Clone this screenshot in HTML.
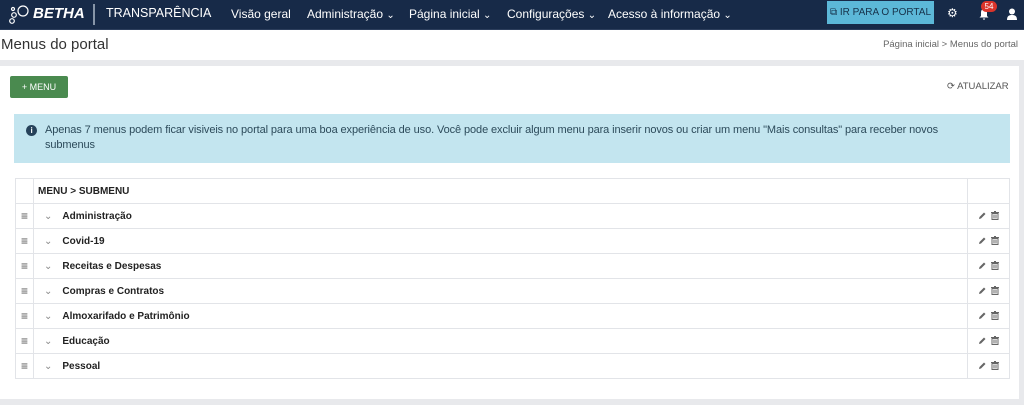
<!DOCTYPE html>
<html><head><meta charset="utf-8"><style>
*{box-sizing:border-box;margin:0;padding:0}
body{width:1024px;height:405px;overflow:hidden;background:#e8e9ec;font-family:"Liberation Sans",sans-serif;position:relative}
.nav{position:absolute;left:0;top:0;width:1024px;height:29px;background:#172a48;color:#fff;font-size:12px}
.nav span{position:absolute;top:7px;white-space:nowrap}
.hdr{position:absolute;left:0;top:29px;width:1024px;height:31px;background:#fff;border-top:1px solid #2c3e5c}
.main{position:absolute;left:0;top:66px;width:1019px;height:333px;background:#fff}
.btn{position:absolute;left:10px;top:76px;width:58px;height:22px;background:#4a8a4f;color:#fff;font-size:9px;line-height:22px;text-align:center;border-radius:2px}
.alert{position:absolute;left:14px;top:114px;width:996px;height:49px;background:#c3e5ef;color:#2c4a5a;font-size:11px;line-height:15px;padding:9px 0 0 31px;letter-spacing:-0.1px}
table{position:absolute;left:15px;top:178px;width:995px;border-collapse:collapse;font-size:10px}
td{border:1px solid #e2e4e8;height:25px;color:#222}
td.h{width:18px;text-align:center;color:#555;font-size:12px}
td.a{width:42px;text-align:center}
td.a svg{vertical-align:middle;margin:0 2px}
b{font-weight:bold}
</style></head><body>
<div class="nav">
<svg style="position:absolute;left:8px;top:5px" width="22" height="20" viewBox="0 0 22 20" fill="none" stroke="#fff" stroke-width="1.2"><circle cx="15" cy="6" r="5"/><circle cx="6" cy="10" r="2.3"/><circle cx="4" cy="16" r="2.3"/><circle cx="5" cy="4" r="1.5"/></svg>
<span style="left:33px;top:5px;font-size:15px;font-weight:bold;font-style:italic">BETHA</span>
<div style="position:absolute;left:93px;top:4px;width:2px;height:21px;background:#8795a8"></div>
<span style="left:106px;top:6px;font-size:12.5px">TRANSPARÊNCIA</span>
<span style="left:231px">Visão geral</span>
<span style="left:307px">Administração <small>⌄</small></span>
<span style="left:409px">Página inicial <small>⌄</small></span>
<span style="left:507px">Configurações <small>⌄</small></span>
<span style="left:608px">Acesso à informação <small>⌄</small></span>
<div style="position:absolute;left:827px;top:1px;width:107px;height:23px;background:#5cb8d8;color:#17324a;font-size:10px;padding-top:6px;text-align:center">⧉ IR PARA O PORTAL</div>
<span style="left:947px;top:6px;font-size:12px">⚙</span>
<svg style="position:absolute;left:978px;top:8px" width="12" height="12" viewBox="0 0 12 12"><path d="M6 1C3.5 1 3 3 3 5v3L1.5 9.5h9L9 8V5C9 3 8.5 1 6 1zM4.8 10.5h2.4a1.2 1.2 0 0 1-2.4 0z" fill="#fff"/></svg>
<div style="position:absolute;left:981px;top:1px;width:16px;height:11px;background:#d9342b;border-radius:6px;font-size:8px;line-height:11px;text-align:center">54</div>
<svg style="position:absolute;left:1007px;top:8px" width="10" height="12" viewBox="0 0 10 12"><circle cx="5" cy="3.5" r="3" fill="#fff"/><path d="M0 12c0-4 2-5 5-5s5 1 5 5z" fill="#fff"/></svg>
</div>
<div class="hdr">
<div style="position:absolute;left:1px;top:6px;font-size:15px;color:#333">Menus do portal</div>
<div style="position:absolute;right:6px;top:9px;font-size:9.5px;color:#666">Página inicial &gt; Menus do portal</div>
</div>
<div class="main"></div>
<div class="btn">+ MENU</div>
<div style="position:absolute;left:947px;top:81px;font-size:9.5px;color:#555">⟳ ATUALIZAR</div>
<div class="alert">
<div style="position:absolute;left:12px;top:11px;width:11px;height:11px;border-radius:50%;background:#26425a;color:#fff;font-size:8px;line-height:11px;text-align:center;font-weight:bold">i</div>
<div style="white-space:nowrap">Apenas 7 menus podem ficar visiveis no portal para uma boa experiência de uso. Você pode excluir algum menu para inserir novos ou criar um menu "Mais consultas" para receber novos</div>
<div>submenus</div>
</div>
<table>
<tr><td class="h"></td><td style="padding-left:4px"><b>MENU &gt; SUBMENU</b></td><td class="a"></td></tr>
<tr><td class="h">≡</td><td><span style="color:#888;margin:0 10px">⌄</span><b>Administração</b></td><td class="a"><svg width="9" height="9" viewBox="0 0 9 9"><path d="M1 8l.5-2L6 1.5 7.5 3 3 7.5z" fill="#666"/></svg><svg width="8" height="9" viewBox="0 0 8 9"><path d="M0 1.5h8M3 0.5h2M1 2.5h6v6H1z" stroke="#666" fill="none"/><path d="M3 3.5v4M5 3.5v4" stroke="#666"/></svg></td></tr>
<tr><td class="h">≡</td><td><span style="color:#888;margin:0 10px">⌄</span><b>Covid-19</b></td><td class="a"><svg width="9" height="9" viewBox="0 0 9 9"><path d="M1 8l.5-2L6 1.5 7.5 3 3 7.5z" fill="#666"/></svg><svg width="8" height="9" viewBox="0 0 8 9"><path d="M0 1.5h8M3 0.5h2M1 2.5h6v6H1z" stroke="#666" fill="none"/><path d="M3 3.5v4M5 3.5v4" stroke="#666"/></svg></td></tr>
<tr><td class="h">≡</td><td><span style="color:#888;margin:0 10px">⌄</span><b>Receitas e Despesas</b></td><td class="a"><svg width="9" height="9" viewBox="0 0 9 9"><path d="M1 8l.5-2L6 1.5 7.5 3 3 7.5z" fill="#666"/></svg><svg width="8" height="9" viewBox="0 0 8 9"><path d="M0 1.5h8M3 0.5h2M1 2.5h6v6H1z" stroke="#666" fill="none"/><path d="M3 3.5v4M5 3.5v4" stroke="#666"/></svg></td></tr>
<tr><td class="h">≡</td><td><span style="color:#888;margin:0 10px">⌄</span><b>Compras e Contratos</b></td><td class="a"><svg width="9" height="9" viewBox="0 0 9 9"><path d="M1 8l.5-2L6 1.5 7.5 3 3 7.5z" fill="#666"/></svg><svg width="8" height="9" viewBox="0 0 8 9"><path d="M0 1.5h8M3 0.5h2M1 2.5h6v6H1z" stroke="#666" fill="none"/><path d="M3 3.5v4M5 3.5v4" stroke="#666"/></svg></td></tr>
<tr><td class="h">≡</td><td><span style="color:#888;margin:0 10px">⌄</span><b>Almoxarifado e Patrimônio</b></td><td class="a"><svg width="9" height="9" viewBox="0 0 9 9"><path d="M1 8l.5-2L6 1.5 7.5 3 3 7.5z" fill="#666"/></svg><svg width="8" height="9" viewBox="0 0 8 9"><path d="M0 1.5h8M3 0.5h2M1 2.5h6v6H1z" stroke="#666" fill="none"/><path d="M3 3.5v4M5 3.5v4" stroke="#666"/></svg></td></tr>
<tr><td class="h">≡</td><td><span style="color:#888;margin:0 10px">⌄</span><b>Educação</b></td><td class="a"><svg width="9" height="9" viewBox="0 0 9 9"><path d="M1 8l.5-2L6 1.5 7.5 3 3 7.5z" fill="#666"/></svg><svg width="8" height="9" viewBox="0 0 8 9"><path d="M0 1.5h8M3 0.5h2M1 2.5h6v6H1z" stroke="#666" fill="none"/><path d="M3 3.5v4M5 3.5v4" stroke="#666"/></svg></td></tr>
<tr><td class="h">≡</td><td><span style="color:#888;margin:0 10px">⌄</span><b>Pessoal</b></td><td class="a"><svg width="9" height="9" viewBox="0 0 9 9"><path d="M1 8l.5-2L6 1.5 7.5 3 3 7.5z" fill="#666"/></svg><svg width="8" height="9" viewBox="0 0 8 9"><path d="M0 1.5h8M3 0.5h2M1 2.5h6v6H1z" stroke="#666" fill="none"/><path d="M3 3.5v4M5 3.5v4" stroke="#666"/></svg></td></tr>
</table>
</body></html>
